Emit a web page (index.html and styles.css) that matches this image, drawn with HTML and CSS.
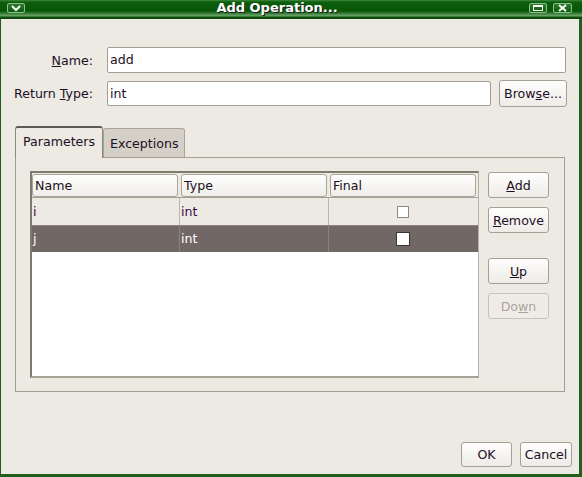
FILE: index.html
```html
<!DOCTYPE html>
<html>
<head>
<meta charset="utf-8">
<link rel="stylesheet" href="styles.css">
</head>
<body>
<div class="window">
  <div class="titlebar">
    <span class="tb-left">
      <span class="tb-btn"><svg width="18" height="10" viewBox="0 0 18 10"><path d="M5 3 L9 7 L13 3" fill="none" stroke="#fff" stroke-width="2"/></svg></span>
    </span>
    <span class="title">Add Operation...</span>
    <span class="tb-right">
      <span class="tb-btn"><svg width="18" height="10" viewBox="0 0 18 10"><rect x="4.5" y="2.5" width="9" height="5" fill="none" stroke="#fff" stroke-width="1"/><rect x="4" y="2" width="10" height="2" fill="#fff"/></svg></span>
      <span class="tb-btn wide"><svg width="19" height="10" viewBox="0 0 19 10"><path d="M6 2 L13 8 M13 2 L6 8" stroke="#fff" stroke-width="2"/></svg></span>
    </span>
  </div>
  <div class="content">
    <div class="form">
      <div class="row">
        <label class="lbl"><u>N</u>ame:</label>
        <div class="field">add</div>
      </div>
      <div class="row row2">
        <label class="lbl">Return <u>T</u>ype:</label>
        <div class="field">int</div>
        <button class="btn browse">Brow<u>s</u>e...</button>
      </div>
    </div>
    <div class="notebook">
      <div class="tabs">
        <div class="tab active">Parameters</div>
        <div class="tab">Exceptions</div>
      </div>
      <div class="panel">
        <div class="tree">
          <div class="thead">
            <div class="th"><span class="hbtn">Name</span></div>
            <div class="th"><span class="hbtn">Type</span></div>
            <div class="th"><span class="hbtn">Final</span></div>
          </div>
          <div class="tr">
            <div class="td">i</div>
            <div class="td">int</div>
            <div class="td chk"><span class="cb"></span></div>
          </div>
          <div class="tr sel">
            <div class="td">j</div>
            <div class="td">int</div>
            <div class="td chk"><span class="cb"></span></div>
          </div>
        </div>
        <div class="side">
          <button class="btn"><u>A</u>dd</button>
          <button class="btn"><u>R</u>emove</button>
          <button class="btn spaced"><u>U</u>p</button>
          <button class="btn disabled">Do<u>w</u>n</button>
        </div>
      </div>
    </div>
    <div class="footer">
      <button class="btn ok">OK</button>
      <button class="btn cancel">Cancel</button>
    </div>
  </div>
</div>
</body>
</html>
```

FILE: styles.css
```css
* { box-sizing: border-box; }
html, body { margin: 0; padding: 0; }
body {
  width: 582px;
  height: 477px;
  overflow: hidden;
  font-family: "DejaVu Sans", sans-serif;
  font-size: 12.6px;
  color: #1c1024;
}
.window {
  width: 582px;
  height: 477px;
  display: flex;
  flex-direction: column;
}
.titlebar {
  height: 19px;
  flex: none;
  display: flex;
  align-items: flex-start;
  background: linear-gradient(to bottom, #3f8a3f 0px, #0d5e0d 2px, #075607 11px, #2f762f 13px, #6ea66e 16px, #0d4d0d 17px, #0a480a 19px);
  color: #fff;
}
.tb-left { width: 25px; padding-left: 7px; padding-top: 3px; display: flex; }
.tb-right { display: flex; gap: 6px; padding-top: 3px; padding-right: 10px; }
.tb-btn {
  display: block;
  width: 18px;
  height: 10px;
  border: 1px solid #8fbf8f;
  border-radius: 2px;
  background: linear-gradient(#2c7c2c, #0c5c0c);
  position: relative;
}
.tb-btn.wide { width: 19px; }
.tb-btn svg { position: absolute; left: -1px; top: -1px; }
.title {
  flex: 1;
  text-align: center;
  font-weight: bold;
  font-size: 13px;
  line-height: 15px;
  text-shadow: 1px 1px 0 #1b1b1b;
}
.content {
  flex: 1;
  display: flex;
  flex-direction: column;
  background: #edeae4;
  border-left: 1px solid #1f5e1f;
  border-right: 3px solid #1f5e1f;
  border-bottom: 3px solid #1f5e1f;
}
.form {
  padding: 28px 13px 0 12px;
  display: flex;
  flex-direction: column;
  gap: 7px;
}
.row { display: flex; align-items: center; height: 26px; }
.row2 { height: 27px; }
.lbl {
  width: 80px;
  text-align: right;
  margin-right: 14px;
}
.field {
  flex: 1;
  height: 26px;
  background: #fff;
  border: 1px solid #a39d92;
  border-radius: 2px;
  padding-left: 2px;
  line-height: 24px;
}
.row2 .field { height: 25px; line-height: 23px; }
.btn {
  font-family: inherit;
  font-size: inherit;
  color: #1c1024;
  border: 1px solid #a49e93;
  border-radius: 3px;
  background: linear-gradient(#fefefd, #eeebe6);
  padding: 0;
  text-align: center;
}
.browse { width: 68px; height: 27px; margin-left: 8px; margin-right: -1px; }
.notebook {
  margin: 19px 14px 0 14px;
  display: flex;
  flex-direction: column;
}
.tabs {
  display: flex;
  align-items: flex-end;
  height: 31px;
}
.tab {
  height: 29px;
  width: 82px;
  padding: 0 0 0 6px;
  line-height: 29px;
  background: #d5d0c7;
  border: 1px solid #a8a297;
  border-bottom: none;
  border-radius: 3px 3px 0 0;
}
.tab.active {
  height: 32px;
  margin-bottom: -1px;
  line-height: 28px;
  padding: 0 0 0 7px;
  width: 88px;
  background: #edeae4;
  border-color: #8e887d;
  border-top: 2px solid #5f5a55;
  position: relative;
  z-index: 1;
}
.panel {
  height: 235px;
  border: 1px solid #a39d92;
  display: flex;
  gap: 9px;
  padding: 13px 15px 0 14px;
}
.tree {
  flex: 1;
  height: 207px;
  background: #fff;
  border-top: 2px solid #7f796e;
  border-left: 2px solid #7f796e;
  border-right: 1px solid #b6b0a5;
  border-bottom: 2px solid #a8a296;
}
.thead, .tr {
  display: grid;
  grid-template-columns: 148px 149px 1fr;
}
.thead {
  height: 25px;
  background: #edeae4;
  border-bottom: 1px solid #a49e93;
  padding-top: 1px;
}
.th { padding: 0 2px 0 1px; }
.th:first-child { padding-left: 0; }
.hbtn {
  display: block;
  height: 23px;
  line-height: 21px;
  padding-left: 2px;
  border: 1px solid #aba599;
  border-radius: 3px;
  background: linear-gradient(#fefefd, #efede8);
}
.tr {
  height: 27px;
  background: #edeae4;
}
.td {
  line-height: 27px;
  padding-left: 1px;
  border-right: 1px solid #bcb6ab;
  color: #3a0a4a;
}
.td.chk { border-right: none; display: flex; align-items: center; justify-content: center; padding-right: 2px; }
.cb {
  display: block;
  width: 12px;
  height: 12px;
  border: 1px solid #8d877c;
  background: #fff;
}
.tr.sel {
  background: #716866;
  border-top: 1px solid #8e8580;
}
.tr.sel .td { color: #fff; line-height: 26px; border-right-color: #8a827e; }
.tr.sel .cb { width: 14px; height: 14px; border-color: #3b3533; }
.side {
  width: 61px;
  display: flex;
  flex-direction: column;
  padding-top: 1px;
  gap: 9px;
}
.side .btn { height: 26px; width: 61px; }
.side .spaced { margin-top: 16px; }
.btn.disabled {
  color: #aaa49b;
  border-color: #c9c4bb;
  background: #efece7;
}
.footer {
  margin-top: auto;
  display: flex;
  justify-content: flex-end;
  gap: 8px;
  padding: 0 7px 7px 0;
}
.ok { width: 51px; height: 25px; }
.cancel { width: 52px; height: 25px; }
```
